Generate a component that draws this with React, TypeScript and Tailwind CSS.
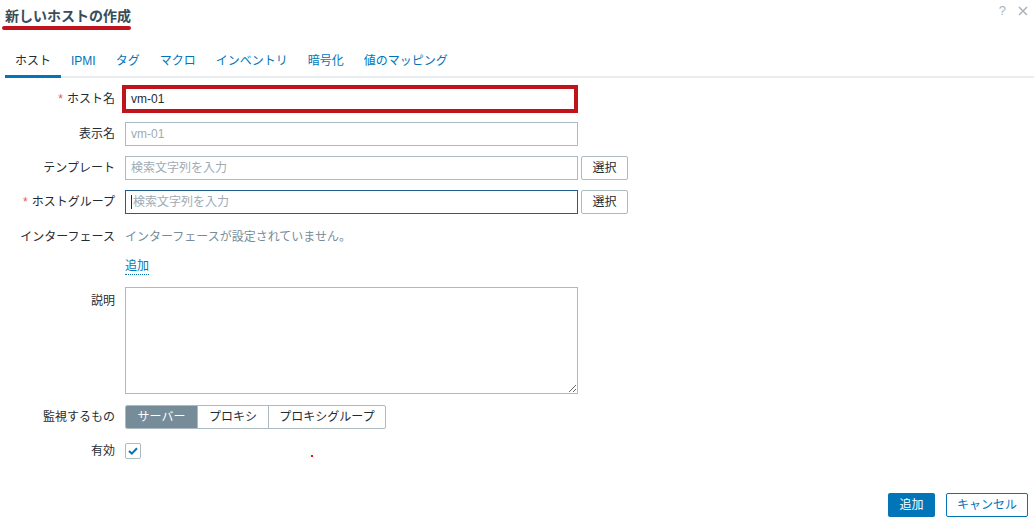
import React from "react";

const font = { fontFamily: '"Liberation Sans", "Noto Sans CJK JP", sans-serif' };

function Label({ children, req }: { children: React.ReactNode; req?: boolean }) {
  return (
    <div className="w-[115px] shrink-0 text-right text-[12px] text-[#1f2c33] pr-0">
      {req && <span className="text-[#e45959] mr-[4px]">*</span>}
      {children}
    </div>
  );
}

export default function App() {
  const tabs = ["ホスト", "IPMI", "タグ", "マクロ", "インベントリ", "暗号化", "値のマッピング"];
  return (
    <div className="w-[1034px] h-[521px] bg-white relative overflow-hidden text-[12px] text-[#1f2c33]" style={font}>
      {/* header */}
      <div className="flex items-start justify-between">
        <div className="pl-[5px] pt-[8px]">
          <div className="text-[14px] font-bold text-[#384d58] leading-[17px]">新しいホストの作成</div>
          <div className="mt-[1px] -ml-[3px] w-[129px] h-[4px] rounded-full bg-[#c0141c]" />
        </div>
        <div className="flex items-center gap-[12px] pt-[1px] pr-[6px] text-[#a9b4ba] text-[13px]">
          <span>?</span>
          <svg width="10" height="10" viewBox="0 0 10 10"><path d="M1 1L9 9M9 1L1 9" stroke="#a9b4ba" strokeWidth="1.5" /></svg>
        </div>
      </div>

      {/* tabs */}
      <div className="mt-[24px] ml-[5px] flex border-b-[2px] border-[#ebeef0]">
        {tabs.map((t, i) => (
          <div
            key={t}
            className={
              i === 0
                ? "px-[10px] pb-[6px] -mb-[2px] border-b-[3px] border-[#0275b8] text-[#1f2c33] leading-[15px]"
                : "px-[10px] pb-[6px] -mb-[2px] border-b-[3px] border-transparent text-[#0275b8] leading-[15px]"
            }
          >
            {t}
          </div>
        ))}
      </div>

      {/* form */}
      <div className="flex flex-col">
        <div className="mt-[7px] flex items-center h-[28px]">
          <Label req>ホスト名</Label>
          <div className="ml-[7px] w-[456px] h-[28px] border-[4px] border-[#c0141c] flex items-center pl-[5px] text-[#1f2c33]">vm-01</div>
        </div>

        <div className="mt-[9px] flex items-center h-[24px]">
          <Label>表示名</Label>
          <div className="ml-[10px] w-[453px] h-[24px] border border-[#acbbc2] flex items-center pl-[5px] text-[#9fabb2]">vm-01</div>
        </div>

        <div className="mt-[10px] flex items-center h-[24px]">
          <Label>テンプレート</Label>
          <div className="ml-[10px] w-[453px] h-[24px] border border-[#acbbc2] flex items-center pl-[5px] text-[#9fabb2]">検索文字列を入力</div>
          <div className="ml-[3px] w-[47px] h-[24px] border border-[#acbbc2] rounded-[2px] flex items-center justify-center text-[#1f2c33]">選択</div>
        </div>

        <div className="mt-[10px] flex items-center h-[24px]">
          <Label req>ホストグループ</Label>
          <div className="ml-[10px] w-[453px] h-[24px] border border-[#1f5f8f] flex items-center pl-[5px] text-[#9fabb2]">
            <span className="w-[1px] h-[14px] bg-[#1f2c33] mr-[1px]" />
            検索文字列を入力
          </div>
          <div className="ml-[3px] w-[47px] h-[24px] border border-[#acbbc2] rounded-[2px] flex items-center justify-center text-[#1f2c33]">選択</div>
        </div>

        <div className="mt-[14px] flex items-center h-[18px]">
          <Label>インターフェース</Label>
          <div className="ml-[10px] text-[#768d99]">インターフェースが設定されていません。</div>
        </div>

        <div className="mt-[12px] flex items-center h-[18px]">
          <div className="w-[115px] shrink-0" />
          <div className="ml-[10px] text-[#0275b8] border-b border-dotted border-[#0275b8] leading-[15px]">追加</div>
        </div>

        <div className="mt-[11px] flex items-start">
          <div className="pt-[5px]">
            <Label>説明</Label>
          </div>
          <textarea className="ml-[10px] w-[453px] h-[107px] border border-[#acbbc2] outline-none block" readOnly />
        </div>

        <div className="mt-[11px] flex items-center h-[24px]">
          <Label>監視するもの</Label>
          <div className="ml-[10px] flex h-[24px] border border-[#acbbc2] rounded-[2px] overflow-hidden">
            <div className="w-[71px] bg-[#768d99] text-white flex items-center justify-center">サーバー</div>
            <div className="w-[71px] border-l border-[#acbbc2] flex items-center justify-center">プロキシ</div>
            <div className="w-[117px] border-l border-[#acbbc2] flex items-center justify-center">プロキシグループ</div>
          </div>
        </div>

        <div className="mt-[14px] flex items-center h-[16px]">
          <Label>有効</Label>
          <div className="ml-[10px] w-[16px] h-[16px] border border-[#acbbc2] rounded-[2px] flex items-center justify-center">
            <svg width="10" height="8" viewBox="0 0 10 8"><path d="M1 4L3.8 6.6L9 1.2" fill="none" stroke="#0275b8" strokeWidth="2" /></svg>
          </div>
        </div>

        <div className="mt-[34px] flex justify-end pr-[6px] gap-[11px]">
          <div className="w-[47px] h-[24px] bg-[#0275b8] text-white rounded-[2px] flex items-center justify-center">追加</div>
          <div className="w-[82px] h-[24px] border border-[#0275b8] text-[#0275b8] rounded-[2px] flex items-center justify-center">キャンセル</div>
        </div>
      </div>

      <div className="absolute left-[311px] top-[455px] w-[2px] h-[2px] bg-[#e8101c]" />
    </div>
  );
}
